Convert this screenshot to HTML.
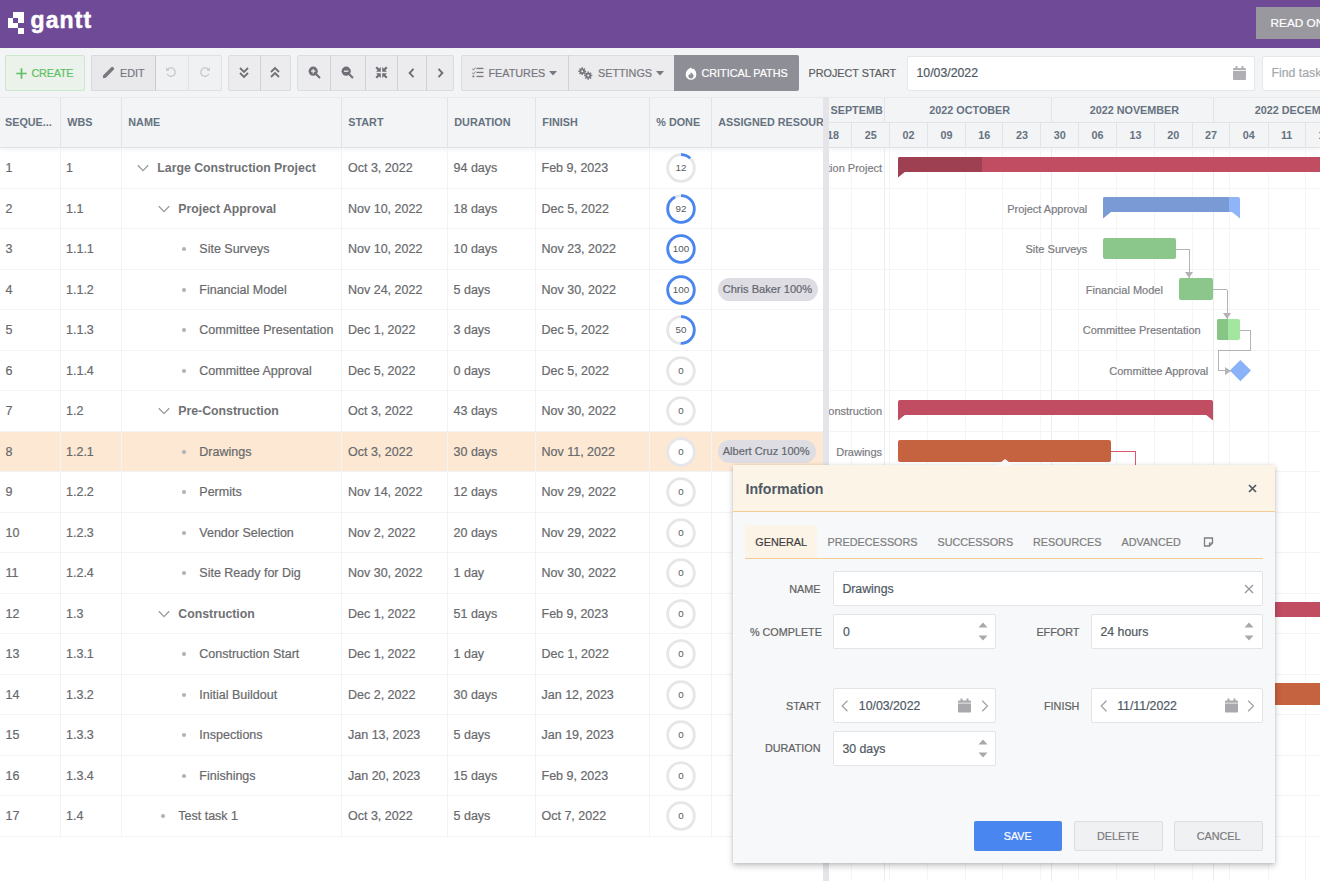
<!DOCTYPE html><html><head><meta charset="utf-8"><style>
*{box-sizing:border-box;margin:0;padding:0}
html,body{width:1320px;height:881px;overflow:hidden;background:#fff;font-family:"Liberation Sans", sans-serif;}
.a{position:absolute}
.t{position:absolute;white-space:nowrap;line-height:1}
.btn{position:absolute;top:55px;height:36px;background:#ececee;border:1px solid #dcdde1;}
.hc{position:absolute;font-size:10.8px;font-weight:700;color:#667280;white-space:nowrap;line-height:1}
.cell{position:absolute;font-size:12.5px;color:#68696c;white-space:nowrap;line-height:1}
.vl{position:absolute;width:1px;background:#f2f3f5}
.hl{position:absolute;height:1px;background:#f2f3f5}
.lbl{position:absolute;font-size:11px;color:#7b7b7f;white-space:nowrap;line-height:1;text-align:right}
.chip{position:absolute;height:23px;border-radius:12px;background:#dddde3;color:#64676e;font-size:11.1px;line-height:23px;padding:0 6px 0 5px;white-space:nowrap}
.fl{position:absolute;font-size:10.8px;color:#616161;white-space:nowrap;line-height:1;text-align:right}
.inp{position:absolute;background:#fff;border:1px solid #e3e4e8;border-radius:2px}
.it{position:absolute;font-size:12.3px;color:#4f5964;white-space:nowrap;line-height:1}
.tab{position:absolute;font-size:10.8px;color:#7d7d7d;white-space:nowrap;line-height:1}
.cell,.lbl,.fl,.it,.tab,.chip,.t{-webkit-text-stroke:0.2px currentColor}
.bold{-webkit-text-stroke:0}
</style></head><body>
<div class="a" style="left:0;top:0;width:1320px;height:48px;background:#6f4a97"></div>
<div class="a" style="left:13.10px;top:12.30px;width:5.40px;height:5.40px;background:#fff"></div>
<div class="a" style="left:18.40px;top:12.30px;width:5.40px;height:5.40px;background:#fff"></div>
<div class="a" style="left:7.80px;top:17.60px;width:5.40px;height:5.40px;background:#fff"></div>
<div class="a" style="left:18.40px;top:17.60px;width:5.40px;height:5.40px;background:#fff"></div>
<div class="a" style="left:7.80px;top:22.90px;width:5.40px;height:5.40px;background:#fff"></div>
<div class="a" style="left:13.10px;top:22.90px;width:5.40px;height:5.40px;background:#fff"></div>
<div class="a" style="left:18.40px;top:28.20px;width:5.40px;height:5.40px;background:#fff"></div>
<div class="t" style="left:30.5px;top:9px;font-size:23px;font-weight:700;color:#fff;letter-spacing:1.1px;-webkit-text-stroke:0.5px #fff">gantt</div>
<div class="a" style="left:1256px;top:7px;width:80px;height:32px;background:#98989e"></div>
<div class="t" style="left:1270.5px;top:18px;font-size:11.8px;color:#fff">READ ONLY</div>
<div class="a" style="left:0;top:48px;width:1320px;height:50px;background:#f3f4f6"></div>
<div class="a" style="left:5px;top:55px;width:80px;height:36px;background:#ebf2ec;border:1px solid #cbe8cc;border-radius:2px"></div>
<svg class="a" style="left:16px;top:67.8px" width="11" height="11" viewBox="0 0 11 11"><path d="M5.5 0.3 V10.7 M0.3 5.5 H10.7" stroke="#5cc160" stroke-width="1.7"/></svg>
<div class="t" style="left:31.5px;top:68px;font-size:10.8px;color:#5cc160;letter-spacing:-0.2px">CREATE</div>
<div class="a" style="left:91px;top:55px;width:131px;height:36px;background:#f0f1f3;border:1px solid #dfe0e3;border-radius:2px"></div>
<div class="a" style="left:91px;top:55px;width:64.5px;height:36px;background:#e9e9ec;border:1px solid #d9dade;border-right:1px solid #c9cacf;border-radius:2px 0 0 2px"></div>
<div class="a" style="left:188px;top:55px;width:1px;height:36px;background:#e2e3e6"></div>
<svg class="a" style="left:102px;top:66px" width="13" height="13" viewBox="0 0 13 13"><path d="M0.8 12.2 L1.3 9.2 L9.2 1.3 Q10.2 0.3 11.2 1.3 L11.7 1.8 Q12.7 2.8 11.7 3.8 L3.8 11.7 Z" fill="#77777f"/></svg>
<div class="t" style="left:120px;top:68px;font-size:10.8px;color:#77777f">EDIT</div>
<svg class="a" style="left:165px;top:66px" width="12" height="12" viewBox="0 0 12 12"><path d="M3 3.2 A4.2 4.2 0 1 1 2.2 8" fill="none" stroke="#c6c6ca" stroke-width="1.3"/><path d="M1 1.5 L1.2 5 L4.6 4.4 Z" fill="#c6c6ca"/></svg>
<svg class="a" style="left:199px;top:66px" width="12" height="12" viewBox="0 0 12 12"><path d="M9 3.2 A4.2 4.2 0 1 0 9.8 8" fill="none" stroke="#c6c6ca" stroke-width="1.3"/><path d="M11 1.5 L10.8 5 L7.4 4.4 Z" fill="#c6c6ca"/></svg>
<div class="a" style="left:228px;top:55px;width:62.5px;height:36px;background:#ececee;border:1px solid #dcdde1;border-radius:2px"></div>
<div class="a" style="left:259.5px;top:55px;width:1px;height:36px;background:#cfd0d4"></div>
<svg class="a" style="left:238px;top:66px" width="12" height="13" viewBox="0 0 12 13"><path d="M2 2 L6 6 L10 2 M2 7 L6 11 L10 7" fill="none" stroke="#6f6f77" stroke-width="1.8"/></svg>
<svg class="a" style="left:268.5px;top:66px" width="12" height="13" viewBox="0 0 12 13"><path d="M2 6 L6 2 L10 6 M2 11 L6 7 L10 11" fill="none" stroke="#6f6f77" stroke-width="1.8"/></svg>
<div class="a" style="left:297px;top:55px;width:156.5px;height:36px;background:#ececee;border:1px solid #dcdde1;border-radius:2px"></div>
<div class="a" style="left:330.4px;top:55px;width:1px;height:36px;background:#cfd0d4"></div>
<div class="a" style="left:364.5px;top:55px;width:1px;height:36px;background:#cfd0d4"></div>
<div class="a" style="left:397.3px;top:55px;width:1px;height:36px;background:#cfd0d4"></div>
<div class="a" style="left:425.5px;top:55px;width:1px;height:36px;background:#cfd0d4"></div>
<svg class="a" style="left:307.5px;top:66px" width="13" height="13" viewBox="0 0 13 13"><circle cx="5.2" cy="5.2" r="4.6" fill="#6f6f77"/><path d="M8.2 8.2 L12 12" stroke="#6f6f77" stroke-width="2"/><path d="M5.2 3 V7.4 M3 5.2 H7.4" stroke="#ececee" stroke-width="1.3"/></svg>
<svg class="a" style="left:341px;top:66px" width="13" height="13" viewBox="0 0 13 13"><circle cx="5.2" cy="5.2" r="4.6" fill="#6f6f77"/><path d="M8.2 8.2 L12 12" stroke="#6f6f77" stroke-width="2"/><path d="M3 5.2 H7.4" stroke="#ececee" stroke-width="1.3"/></svg>
<svg class="a" style="left:374.5px;top:66px" width="13" height="13" viewBox="0 0 13 13"><g stroke="#6f6f77" stroke-width="2.2" fill="none"><path d="M1.2 1.2 L4 4 M11.8 1.2 L9 4 M1.2 11.8 L4 9 M11.8 11.8 L9 9"/></g><g fill="#6f6f77"><path d="M5.8 1 V5.8 H1 Z M7.2 1 V5.8 H12 Z M5.8 12 V7.2 H1 Z M7.2 12 V7.2 H12 Z"/></g></svg>
<svg class="a" style="left:407px;top:66.5px" width="9" height="12" viewBox="0 0 9 12"><path d="M6.5 1.8 L2.6 6 L6.5 10.2" fill="none" stroke="#6f6f77" stroke-width="1.9"/></svg>
<svg class="a" style="left:435.5px;top:66.5px" width="9" height="12" viewBox="0 0 9 12"><path d="M2.5 1.8 L6.4 6 L2.5 10.2" fill="none" stroke="#6f6f77" stroke-width="1.9"/></svg>
<div class="a" style="left:460.5px;top:55px;width:214px;height:36px;background:#ececee;border:1px solid #dcdde1;border-radius:2px"></div>
<div class="a" style="left:567.5px;top:55px;width:1px;height:36px;background:#cfd0d4"></div>
<svg class="a" style="left:471.5px;top:67px" width="12" height="11" viewBox="0 0 12 11"><g fill="#77777f"><rect x="4.5" y="0.8" width="7" height="1.3"/><rect x="4.5" y="4.8" width="7" height="1.3"/><rect x="4.5" y="8.8" width="7" height="1.3"/><path d="M0.5 1.5 L1.5 2.5 L3.3 0.2 L3.8 0.7 L1.5 3.5 L0 2 Z"/><path d="M0.5 5.5 L1.5 6.5 L3.3 4.2 L3.8 4.7 L1.5 7.5 L0 6 Z"/><rect x="0.5" y="8.5" width="1.8" height="1.8"/></g></svg>
<div class="t" style="left:488.5px;top:68px;font-size:10.8px;color:#77777f">FEATURES</div>
<svg class="a" style="left:548.5px;top:71px" width="8" height="5" viewBox="0 0 8 5"><path d="M0 0 H8 L4 4.5 Z" fill="#77777f"/></svg>
<svg class="a" style="left:578px;top:67px" width="15" height="13" viewBox="0 0 15 13"><g fill="#77777f"><circle cx="4.2" cy="4.2" r="2.6"/><circle cx="10.2" cy="8.6" r="2.8"/></g><g stroke="#77777f" stroke-width="1.5"><path d="M4.2 0.3 V8.1 M0.3 4.2 H8.1 M1.5 1.5 L6.9 6.9 M6.9 1.5 L1.5 6.9"/><path d="M10.2 4.5 V12.7 M6.1 8.6 H14.3 M7.3 5.7 L13.1 11.5 M13.1 5.7 L7.3 11.5"/></g><g fill="#ececee"><circle cx="4.2" cy="4.2" r="1"/><circle cx="10.2" cy="8.6" r="1.1"/></g></svg>
<div class="t" style="left:598px;top:68px;font-size:10.8px;color:#77777f">SETTINGS</div>
<svg class="a" style="left:656px;top:71px" width="8" height="5" viewBox="0 0 8 5"><path d="M0 0 H8 L4 4.5 Z" fill="#77777f"/></svg>
<div class="a" style="left:674px;top:55px;width:125px;height:36px;background:#8e8e96;border-radius:0 2px 2px 0"></div>
<svg class="a" style="left:685px;top:66.5px" width="12" height="13" viewBox="0 0 12 13"><path d="M6 0.5 C6.5 1.8 7.5 2.3 8.3 1.6 C10.2 3 11.3 5 11.3 7.4 A5.3 5.3 0 0 1 0.7 7.4 C0.7 4.5 2.8 1.8 6 0.5 Z" fill="#fff"/><path d="M6 5.2 C6.6 6.2 8.6 7.2 8.6 8.8 A2.6 2.6 0 0 1 3.4 8.8 C3.4 7.8 4 7.3 4.5 7 C4.6 7.8 5 8 5.4 8 C5.2 7 5.4 6 6 5.2 Z" fill="#8e8e96"/></svg>
<div class="t" style="left:701.5px;top:68px;font-size:10.8px;color:#fff">CRITICAL PATHS</div>
<div class="t" style="left:808.5px;top:68px;font-size:10.8px;color:#5c5c62">PROJECT START</div>
<div class="inp" style="left:906.5px;top:55.5px;width:348px;height:35px;border-color:#e6e7ea"></div>
<div class="it" style="left:916.5px;top:67px">10/03/2022</div>
<svg class="a" style="left:1233px;top:66px" width="13" height="14" viewBox="0 0 13 14"><rect x="0" y="2" width="13" height="12" rx="1" fill="#b0b0b4"/><rect x="2.5" y="0" width="2" height="3" fill="#b0b0b4"/><rect x="8.5" y="0" width="2" height="3" fill="#b0b0b4"/><rect x="0" y="4.2" width="13" height="0.8" fill="#fff"/></svg>
<div class="inp" style="left:1261.5px;top:55.5px;width:80px;height:35px;border-color:#e6e7ea"></div>
<div class="it" style="left:1271.5px;top:67px;color:#a5a8ad">Find task</div>
<div class="a" style="left:0;top:97px;width:1320px;height:51px;background:#f3f4f6;border-top:1px solid #e9eaed;border-bottom:1px solid #e1e2e5;box-shadow:0 2px 4px rgba(0,0,0,0.05)"></div>
<div class="hc" style="left:5px;top:117.3px">SEQUE...</div>
<div class="a" style="left:60px;top:98px;width:1px;height:49.5px;background:#e2e3e7"></div>
<div class="hc" style="left:67.3px;top:117.3px">WBS</div>
<div class="a" style="left:121px;top:98px;width:1px;height:49.5px;background:#e2e3e7"></div>
<div class="hc" style="left:128.3px;top:117.3px">NAME</div>
<div class="a" style="left:341px;top:98px;width:1px;height:49.5px;background:#e2e3e7"></div>
<div class="hc" style="left:348.3px;top:117.3px">START</div>
<div class="a" style="left:447px;top:98px;width:1px;height:49.5px;background:#e2e3e7"></div>
<div class="hc" style="left:454.3px;top:117.3px">DURATION</div>
<div class="a" style="left:535px;top:98px;width:1px;height:49.5px;background:#e2e3e7"></div>
<div class="hc" style="left:542.3px;top:117.3px">FINISH</div>
<div class="a" style="left:649px;top:98px;width:1px;height:49.5px;background:#e2e3e7"></div>
<div class="hc" style="left:656.3px;top:117.3px">% DONE</div>
<div class="a" style="left:711px;top:98px;width:1px;height:49.5px;background:#e2e3e7"></div>
<div class="hc" style="left:718.3px;top:117.3px">ASSIGNED RESOUR</div>
<div class="a" style="left:0;top:431.50px;width:823.7px;height:40.5px;background:#fce8d3"></div>
<div class="vl" style="left:60px;top:148px;height:688.5px"></div>
<div class="vl" style="left:121px;top:148px;height:688.5px"></div>
<div class="vl" style="left:341px;top:148px;height:688.5px"></div>
<div class="vl" style="left:447px;top:148px;height:688.5px"></div>
<div class="vl" style="left:535px;top:148px;height:688.5px"></div>
<div class="vl" style="left:649px;top:148px;height:688.5px"></div>
<div class="vl" style="left:711px;top:148px;height:688.5px"></div>
<div class="hl" style="left:0;top:187.50px;width:823.7px"></div>
<div class="hl" style="left:0;top:228.00px;width:823.7px"></div>
<div class="hl" style="left:0;top:268.50px;width:823.7px"></div>
<div class="hl" style="left:0;top:309.00px;width:823.7px"></div>
<div class="hl" style="left:0;top:349.50px;width:823.7px"></div>
<div class="hl" style="left:0;top:390.00px;width:823.7px"></div>
<div class="hl" style="left:0;top:430.50px;width:823.7px"></div>
<div class="hl" style="left:0;top:471.00px;width:823.7px"></div>
<div class="hl" style="left:0;top:511.50px;width:823.7px"></div>
<div class="hl" style="left:0;top:552.00px;width:823.7px"></div>
<div class="hl" style="left:0;top:592.50px;width:823.7px"></div>
<div class="hl" style="left:0;top:633.00px;width:823.7px"></div>
<div class="hl" style="left:0;top:673.50px;width:823.7px"></div>
<div class="hl" style="left:0;top:714.00px;width:823.7px"></div>
<div class="hl" style="left:0;top:754.50px;width:823.7px"></div>
<div class="hl" style="left:0;top:795.00px;width:823.7px"></div>
<div class="hl" style="left:0;top:835.50px;width:823.7px"></div>
<div class="cell" style="left:5.5px;top:162.35px">1</div>
<div class="cell" style="left:66px;top:162.35px">1</div>
<svg class="a" style="left:136.80px;top:164.25px" width="12" height="8" viewBox="0 0 12 8"><path d="M0.8 1.2 L6 6.6 L11.2 1.2" fill="none" stroke="#9a9ba0" stroke-width="1.35"/></svg>
<div class="cell bold" style="left:157.30px;top:162.35px;font-weight:700;font-size:12.3px;color:#707174">Large Construction Project</div>
<div class="cell" style="left:348px;top:162.35px">Oct 3, 2022</div>
<div class="cell" style="left:453.5px;top:162.35px">94 days</div>
<div class="cell" style="left:541.5px;top:162.35px">Feb 9, 2023</div>
<svg class="a" style="left:666.00px;top:153.25px" width="30" height="30" viewBox="0 0 30 30"><circle cx="15" cy="15" r="13.3" fill="none" stroke="#e6e6e8" stroke-width="2.8"/><circle cx="15" cy="15" r="13.3" fill="none" stroke="#4a86f0" stroke-width="2.8" stroke-dasharray="10.03 83.57" transform="rotate(-90 15 15)"/><text x="15" y="18.3" text-anchor="middle" font-family="Liberation Sans" font-size="9.8" fill="#55585c">12</text></svg>
<div class="cell" style="left:5.5px;top:202.85px">2</div>
<div class="cell" style="left:66px;top:202.85px">1.1</div>
<svg class="a" style="left:157.80px;top:204.75px" width="12" height="8" viewBox="0 0 12 8"><path d="M0.8 1.2 L6 6.6 L11.2 1.2" fill="none" stroke="#9a9ba0" stroke-width="1.35"/></svg>
<div class="cell bold" style="left:178.30px;top:202.85px;font-weight:700;font-size:12.3px;color:#707174">Project Approval</div>
<div class="cell" style="left:348px;top:202.85px">Nov 10, 2022</div>
<div class="cell" style="left:453.5px;top:202.85px">18 days</div>
<div class="cell" style="left:541.5px;top:202.85px">Dec 5, 2022</div>
<svg class="a" style="left:666.00px;top:193.75px" width="30" height="30" viewBox="0 0 30 30"><circle cx="15" cy="15" r="13.3" fill="none" stroke="#e6e6e8" stroke-width="2.8"/><circle cx="15" cy="15" r="13.3" fill="none" stroke="#4a86f0" stroke-width="2.8" stroke-dasharray="76.88 83.57" transform="rotate(-90 15 15)"/><text x="15" y="18.3" text-anchor="middle" font-family="Liberation Sans" font-size="9.8" fill="#55585c">92</text></svg>
<div class="cell" style="left:5.5px;top:243.35px">3</div>
<div class="cell" style="left:66px;top:243.35px">1.1.1</div>
<div class="a" style="left:182.00px;top:247.45px;width:3.6px;height:3.6px;border-radius:50%;background:#b3b4b8"></div>
<div class="cell" style="left:199.30px;top:243.35px">Site Surveys</div>
<div class="cell" style="left:348px;top:243.35px">Nov 10, 2022</div>
<div class="cell" style="left:453.5px;top:243.35px">10 days</div>
<div class="cell" style="left:541.5px;top:243.35px">Nov 23, 2022</div>
<svg class="a" style="left:666.00px;top:234.25px" width="30" height="30" viewBox="0 0 30 30"><circle cx="15" cy="15" r="13.3" fill="none" stroke="#e6e6e8" stroke-width="2.8"/><circle cx="15" cy="15" r="13.3" fill="none" stroke="#4a86f0" stroke-width="2.8" stroke-dasharray="83.57 83.57" transform="rotate(-90 15 15)"/><text x="15" y="18.3" text-anchor="middle" font-family="Liberation Sans" font-size="9.8" fill="#55585c">100</text></svg>
<div class="cell" style="left:5.5px;top:283.85px">4</div>
<div class="cell" style="left:66px;top:283.85px">1.1.2</div>
<div class="a" style="left:182.00px;top:287.95px;width:3.6px;height:3.6px;border-radius:50%;background:#b3b4b8"></div>
<div class="cell" style="left:199.30px;top:283.85px">Financial Model</div>
<div class="cell" style="left:348px;top:283.85px">Nov 24, 2022</div>
<div class="cell" style="left:453.5px;top:283.85px">5 days</div>
<div class="cell" style="left:541.5px;top:283.85px">Nov 30, 2022</div>
<svg class="a" style="left:666.00px;top:274.75px" width="30" height="30" viewBox="0 0 30 30"><circle cx="15" cy="15" r="13.3" fill="none" stroke="#e6e6e8" stroke-width="2.8"/><circle cx="15" cy="15" r="13.3" fill="none" stroke="#4a86f0" stroke-width="2.8" stroke-dasharray="83.57 83.57" transform="rotate(-90 15 15)"/><text x="15" y="18.3" text-anchor="middle" font-family="Liberation Sans" font-size="9.8" fill="#55585c">100</text></svg>
<div class="chip" style="left:717.7px;top:278.25px">Chris Baker 100%</div>
<div class="cell" style="left:5.5px;top:324.35px">5</div>
<div class="cell" style="left:66px;top:324.35px">1.1.3</div>
<div class="a" style="left:182.00px;top:328.45px;width:3.6px;height:3.6px;border-radius:50%;background:#b3b4b8"></div>
<div class="cell" style="left:199.30px;top:324.35px">Committee Presentation</div>
<div class="cell" style="left:348px;top:324.35px">Dec 1, 2022</div>
<div class="cell" style="left:453.5px;top:324.35px">3 days</div>
<div class="cell" style="left:541.5px;top:324.35px">Dec 5, 2022</div>
<svg class="a" style="left:666.00px;top:315.25px" width="30" height="30" viewBox="0 0 30 30"><circle cx="15" cy="15" r="13.3" fill="none" stroke="#e6e6e8" stroke-width="2.8"/><circle cx="15" cy="15" r="13.3" fill="none" stroke="#4a86f0" stroke-width="2.8" stroke-dasharray="41.78 83.57" transform="rotate(-90 15 15)"/><text x="15" y="18.3" text-anchor="middle" font-family="Liberation Sans" font-size="9.8" fill="#55585c">50</text></svg>
<div class="cell" style="left:5.5px;top:364.85px">6</div>
<div class="cell" style="left:66px;top:364.85px">1.1.4</div>
<div class="a" style="left:182.00px;top:368.95px;width:3.6px;height:3.6px;border-radius:50%;background:#b3b4b8"></div>
<div class="cell" style="left:199.30px;top:364.85px">Committee Approval</div>
<div class="cell" style="left:348px;top:364.85px">Dec 5, 2022</div>
<div class="cell" style="left:453.5px;top:364.85px">0 days</div>
<div class="cell" style="left:541.5px;top:364.85px">Dec 5, 2022</div>
<svg class="a" style="left:666.00px;top:355.75px" width="30" height="30" viewBox="0 0 30 30"><circle cx="15" cy="15" r="13.3" fill="none" stroke="#e6e6e8" stroke-width="2.8"/><text x="15" y="18.3" text-anchor="middle" font-family="Liberation Sans" font-size="9.8" fill="#55585c">0</text></svg>
<div class="cell" style="left:5.5px;top:405.35px">7</div>
<div class="cell" style="left:66px;top:405.35px">1.2</div>
<svg class="a" style="left:157.80px;top:407.25px" width="12" height="8" viewBox="0 0 12 8"><path d="M0.8 1.2 L6 6.6 L11.2 1.2" fill="none" stroke="#9a9ba0" stroke-width="1.35"/></svg>
<div class="cell bold" style="left:178.30px;top:405.35px;font-weight:700;font-size:12.3px;color:#707174">Pre-Construction</div>
<div class="cell" style="left:348px;top:405.35px">Oct 3, 2022</div>
<div class="cell" style="left:453.5px;top:405.35px">43 days</div>
<div class="cell" style="left:541.5px;top:405.35px">Nov 30, 2022</div>
<svg class="a" style="left:666.00px;top:396.25px" width="30" height="30" viewBox="0 0 30 30"><circle cx="15" cy="15" r="13.3" fill="none" stroke="#e6e6e8" stroke-width="2.8"/><text x="15" y="18.3" text-anchor="middle" font-family="Liberation Sans" font-size="9.8" fill="#55585c">0</text></svg>
<div class="cell" style="left:5.5px;top:445.85px">8</div>
<div class="cell" style="left:66px;top:445.85px">1.2.1</div>
<div class="a" style="left:182.00px;top:449.95px;width:3.6px;height:3.6px;border-radius:50%;background:#b3b4b8"></div>
<div class="cell" style="left:199.30px;top:445.85px">Drawings</div>
<div class="cell" style="left:348px;top:445.85px">Oct 3, 2022</div>
<div class="cell" style="left:453.5px;top:445.85px">30 days</div>
<div class="cell" style="left:541.5px;top:445.85px">Nov 11, 2022</div>
<svg class="a" style="left:666.00px;top:436.75px" width="30" height="30" viewBox="0 0 30 30"><circle cx="15" cy="15" r="13.3" fill="#fff" stroke="#e6e6e8" stroke-width="2.8"/><text x="15" y="18.3" text-anchor="middle" font-family="Liberation Sans" font-size="9.8" fill="#55585c">0</text></svg>
<div class="chip" style="left:717.7px;top:440.25px">Albert Cruz 100%</div>
<div class="cell" style="left:5.5px;top:486.35px">9</div>
<div class="cell" style="left:66px;top:486.35px">1.2.2</div>
<div class="a" style="left:182.00px;top:490.45px;width:3.6px;height:3.6px;border-radius:50%;background:#b3b4b8"></div>
<div class="cell" style="left:199.30px;top:486.35px">Permits</div>
<div class="cell" style="left:348px;top:486.35px">Nov 14, 2022</div>
<div class="cell" style="left:453.5px;top:486.35px">12 days</div>
<div class="cell" style="left:541.5px;top:486.35px">Nov 29, 2022</div>
<svg class="a" style="left:666.00px;top:477.25px" width="30" height="30" viewBox="0 0 30 30"><circle cx="15" cy="15" r="13.3" fill="none" stroke="#e6e6e8" stroke-width="2.8"/><text x="15" y="18.3" text-anchor="middle" font-family="Liberation Sans" font-size="9.8" fill="#55585c">0</text></svg>
<div class="cell" style="left:5.5px;top:526.85px">10</div>
<div class="cell" style="left:66px;top:526.85px">1.2.3</div>
<div class="a" style="left:182.00px;top:530.95px;width:3.6px;height:3.6px;border-radius:50%;background:#b3b4b8"></div>
<div class="cell" style="left:199.30px;top:526.85px">Vendor Selection</div>
<div class="cell" style="left:348px;top:526.85px">Nov 2, 2022</div>
<div class="cell" style="left:453.5px;top:526.85px">20 days</div>
<div class="cell" style="left:541.5px;top:526.85px">Nov 29, 2022</div>
<svg class="a" style="left:666.00px;top:517.75px" width="30" height="30" viewBox="0 0 30 30"><circle cx="15" cy="15" r="13.3" fill="none" stroke="#e6e6e8" stroke-width="2.8"/><text x="15" y="18.3" text-anchor="middle" font-family="Liberation Sans" font-size="9.8" fill="#55585c">0</text></svg>
<div class="cell" style="left:5.5px;top:567.35px">11</div>
<div class="cell" style="left:66px;top:567.35px">1.2.4</div>
<div class="a" style="left:182.00px;top:571.45px;width:3.6px;height:3.6px;border-radius:50%;background:#b3b4b8"></div>
<div class="cell" style="left:199.30px;top:567.35px">Site Ready for Dig</div>
<div class="cell" style="left:348px;top:567.35px">Nov 30, 2022</div>
<div class="cell" style="left:453.5px;top:567.35px">1 day</div>
<div class="cell" style="left:541.5px;top:567.35px">Nov 30, 2022</div>
<svg class="a" style="left:666.00px;top:558.25px" width="30" height="30" viewBox="0 0 30 30"><circle cx="15" cy="15" r="13.3" fill="none" stroke="#e6e6e8" stroke-width="2.8"/><text x="15" y="18.3" text-anchor="middle" font-family="Liberation Sans" font-size="9.8" fill="#55585c">0</text></svg>
<div class="cell" style="left:5.5px;top:607.85px">12</div>
<div class="cell" style="left:66px;top:607.85px">1.3</div>
<svg class="a" style="left:157.80px;top:609.75px" width="12" height="8" viewBox="0 0 12 8"><path d="M0.8 1.2 L6 6.6 L11.2 1.2" fill="none" stroke="#9a9ba0" stroke-width="1.35"/></svg>
<div class="cell bold" style="left:178.30px;top:607.85px;font-weight:700;font-size:12.3px;color:#707174">Construction</div>
<div class="cell" style="left:348px;top:607.85px">Dec 1, 2022</div>
<div class="cell" style="left:453.5px;top:607.85px">51 days</div>
<div class="cell" style="left:541.5px;top:607.85px">Feb 9, 2023</div>
<svg class="a" style="left:666.00px;top:598.75px" width="30" height="30" viewBox="0 0 30 30"><circle cx="15" cy="15" r="13.3" fill="none" stroke="#e6e6e8" stroke-width="2.8"/><text x="15" y="18.3" text-anchor="middle" font-family="Liberation Sans" font-size="9.8" fill="#55585c">0</text></svg>
<div class="cell" style="left:5.5px;top:648.35px">13</div>
<div class="cell" style="left:66px;top:648.35px">1.3.1</div>
<div class="a" style="left:182.00px;top:652.45px;width:3.6px;height:3.6px;border-radius:50%;background:#b3b4b8"></div>
<div class="cell" style="left:199.30px;top:648.35px">Construction Start</div>
<div class="cell" style="left:348px;top:648.35px">Dec 1, 2022</div>
<div class="cell" style="left:453.5px;top:648.35px">1 day</div>
<div class="cell" style="left:541.5px;top:648.35px">Dec 1, 2022</div>
<svg class="a" style="left:666.00px;top:639.25px" width="30" height="30" viewBox="0 0 30 30"><circle cx="15" cy="15" r="13.3" fill="none" stroke="#e6e6e8" stroke-width="2.8"/><text x="15" y="18.3" text-anchor="middle" font-family="Liberation Sans" font-size="9.8" fill="#55585c">0</text></svg>
<div class="cell" style="left:5.5px;top:688.85px">14</div>
<div class="cell" style="left:66px;top:688.85px">1.3.2</div>
<div class="a" style="left:182.00px;top:692.95px;width:3.6px;height:3.6px;border-radius:50%;background:#b3b4b8"></div>
<div class="cell" style="left:199.30px;top:688.85px">Initial Buildout</div>
<div class="cell" style="left:348px;top:688.85px">Dec 2, 2022</div>
<div class="cell" style="left:453.5px;top:688.85px">30 days</div>
<div class="cell" style="left:541.5px;top:688.85px">Jan 12, 2023</div>
<svg class="a" style="left:666.00px;top:679.75px" width="30" height="30" viewBox="0 0 30 30"><circle cx="15" cy="15" r="13.3" fill="none" stroke="#e6e6e8" stroke-width="2.8"/><text x="15" y="18.3" text-anchor="middle" font-family="Liberation Sans" font-size="9.8" fill="#55585c">0</text></svg>
<div class="cell" style="left:5.5px;top:729.35px">15</div>
<div class="cell" style="left:66px;top:729.35px">1.3.3</div>
<div class="a" style="left:182.00px;top:733.45px;width:3.6px;height:3.6px;border-radius:50%;background:#b3b4b8"></div>
<div class="cell" style="left:199.30px;top:729.35px">Inspections</div>
<div class="cell" style="left:348px;top:729.35px">Jan 13, 2023</div>
<div class="cell" style="left:453.5px;top:729.35px">5 days</div>
<div class="cell" style="left:541.5px;top:729.35px">Jan 19, 2023</div>
<svg class="a" style="left:666.00px;top:720.25px" width="30" height="30" viewBox="0 0 30 30"><circle cx="15" cy="15" r="13.3" fill="none" stroke="#e6e6e8" stroke-width="2.8"/><text x="15" y="18.3" text-anchor="middle" font-family="Liberation Sans" font-size="9.8" fill="#55585c">0</text></svg>
<div class="cell" style="left:5.5px;top:769.85px">16</div>
<div class="cell" style="left:66px;top:769.85px">1.3.4</div>
<div class="a" style="left:182.00px;top:773.95px;width:3.6px;height:3.6px;border-radius:50%;background:#b3b4b8"></div>
<div class="cell" style="left:199.30px;top:769.85px">Finishings</div>
<div class="cell" style="left:348px;top:769.85px">Jan 20, 2023</div>
<div class="cell" style="left:453.5px;top:769.85px">15 days</div>
<div class="cell" style="left:541.5px;top:769.85px">Feb 9, 2023</div>
<svg class="a" style="left:666.00px;top:760.75px" width="30" height="30" viewBox="0 0 30 30"><circle cx="15" cy="15" r="13.3" fill="none" stroke="#e6e6e8" stroke-width="2.8"/><text x="15" y="18.3" text-anchor="middle" font-family="Liberation Sans" font-size="9.8" fill="#55585c">0</text></svg>
<div class="cell" style="left:5.5px;top:810.35px">17</div>
<div class="cell" style="left:66px;top:810.35px">1.4</div>
<div class="a" style="left:161.00px;top:814.45px;width:3.6px;height:3.6px;border-radius:50%;background:#b3b4b8"></div>
<div class="cell" style="left:178.30px;top:810.35px">Test task 1</div>
<div class="cell" style="left:348px;top:810.35px">Oct 3, 2022</div>
<div class="cell" style="left:453.5px;top:810.35px">5 days</div>
<div class="cell" style="left:541.5px;top:810.35px">Oct 7, 2022</div>
<svg class="a" style="left:666.00px;top:801.25px" width="30" height="30" viewBox="0 0 30 30"><circle cx="15" cy="15" r="13.3" fill="none" stroke="#e6e6e8" stroke-width="2.8"/><text x="15" y="18.3" text-anchor="middle" font-family="Liberation Sans" font-size="9.8" fill="#55585c">0</text></svg>
<div class="a" style="left:823.3px;top:97px;width:5.8px;height:784px;background:#e5e5e9"></div>
<div class="a" style="left:829px;top:97.5px;width:491px;height:784px;overflow:hidden">
<div class="a" style="left:0;top:-0.5px;width:600px;height:51px;background:#f3f4f6;border-top:1px solid #e9eaed;border-bottom:1px solid #e1e2e5"></div>
<div class="a" style="left:0;top:24.5px;width:600px;height:1px;background:#e2e3e7"></div>
<div class="a" style="left:55px;top:0;width:1px;height:25px;background:#e2e3e7"></div>
<div class="hc" style="left:1.50px;top:7px;width:53.3px;overflow:hidden">SEPTEMB</div>
<div class="a" style="left:222px;top:0;width:1px;height:25px;background:#e2e3e7"></div>
<div class="hc" style="left:57.00px;top:7px;width:167.40px;text-align:center">2022 OCTOBER</div>
<div class="a" style="left:384px;top:0;width:1px;height:25px;background:#e2e3e7"></div>
<div class="hc" style="left:224.40px;top:7px;width:162.00px;text-align:center">2022 NOVEMBER</div>
<div class="a" style="left:552px;top:0;width:1px;height:25px;background:#e2e3e7"></div>
<div class="hc" style="left:386.40px;top:7px;width:167.40px;text-align:center">2022 DECEMBER</div>
<div class="a" style="left:552px;top:0;width:1px;height:25px;background:#e2e3e7"></div>
<div class="hc" style="left:553.80px;top:7px;width:167.40px;text-align:center">2023 JANUARY</div>
<div class="a" style="left:-15px;top:25px;width:1px;height:25px;background:#e2e3e7"></div>
<div class="hc" style="left:-14.90px;top:32.5px;width:37.80px;text-align:center">18</div>
<div class="a" style="left:22px;top:25px;width:1px;height:25px;background:#e2e3e7"></div>
<div class="hc" style="left:22.90px;top:32.5px;width:37.80px;text-align:center">25</div>
<div class="a" style="left:60px;top:25px;width:1px;height:25px;background:#e2e3e7"></div>
<div class="hc" style="left:60.70px;top:32.5px;width:37.80px;text-align:center">02</div>
<div class="a" style="left:98px;top:25px;width:1px;height:25px;background:#e2e3e7"></div>
<div class="hc" style="left:98.50px;top:32.5px;width:37.80px;text-align:center">09</div>
<div class="a" style="left:136px;top:25px;width:1px;height:25px;background:#e2e3e7"></div>
<div class="hc" style="left:136.30px;top:32.5px;width:37.80px;text-align:center">16</div>
<div class="a" style="left:173px;top:25px;width:1px;height:25px;background:#e2e3e7"></div>
<div class="hc" style="left:174.10px;top:32.5px;width:37.80px;text-align:center">23</div>
<div class="a" style="left:211px;top:25px;width:1px;height:25px;background:#e2e3e7"></div>
<div class="hc" style="left:211.90px;top:32.5px;width:37.80px;text-align:center">30</div>
<div class="a" style="left:249px;top:25px;width:1px;height:25px;background:#e2e3e7"></div>
<div class="hc" style="left:249.70px;top:32.5px;width:37.80px;text-align:center">06</div>
<div class="a" style="left:287px;top:25px;width:1px;height:25px;background:#e2e3e7"></div>
<div class="hc" style="left:287.50px;top:32.5px;width:37.80px;text-align:center">13</div>
<div class="a" style="left:325px;top:25px;width:1px;height:25px;background:#e2e3e7"></div>
<div class="hc" style="left:325.30px;top:32.5px;width:37.80px;text-align:center">20</div>
<div class="a" style="left:363px;top:25px;width:1px;height:25px;background:#e2e3e7"></div>
<div class="hc" style="left:363.10px;top:32.5px;width:37.80px;text-align:center">27</div>
<div class="a" style="left:400px;top:25px;width:1px;height:25px;background:#e2e3e7"></div>
<div class="hc" style="left:400.90px;top:32.5px;width:37.80px;text-align:center">04</div>
<div class="a" style="left:439px;top:25px;width:1px;height:25px;background:#e2e3e7"></div>
<div class="hc" style="left:438.70px;top:32.5px;width:37.80px;text-align:center">11</div>
<div class="a" style="left:476px;top:25px;width:1px;height:25px;background:#e2e3e7"></div>
<div class="hc" style="left:476.50px;top:32.5px;width:37.80px;text-align:center">18</div>
<div class="vl" style="left:-15px;top:50px;height:740px;background:#f5f5f6"></div>
<div class="vl" style="left:22px;top:50px;height:740px;background:#f5f5f6"></div>
<div class="vl" style="left:60px;top:50px;height:740px;background:#f5f5f6"></div>
<div class="vl" style="left:98px;top:50px;height:740px;background:#f5f5f6"></div>
<div class="vl" style="left:136px;top:50px;height:740px;background:#f5f5f6"></div>
<div class="vl" style="left:173px;top:50px;height:740px;background:#f5f5f6"></div>
<div class="vl" style="left:211px;top:50px;height:740px;background:#f5f5f6"></div>
<div class="vl" style="left:249px;top:50px;height:740px;background:#f5f5f6"></div>
<div class="vl" style="left:287px;top:50px;height:740px;background:#f5f5f6"></div>
<div class="vl" style="left:325px;top:50px;height:740px;background:#f5f5f6"></div>
<div class="vl" style="left:363px;top:50px;height:740px;background:#f5f5f6"></div>
<div class="vl" style="left:400px;top:50px;height:740px;background:#f5f5f6"></div>
<div class="vl" style="left:439px;top:50px;height:740px;background:#f5f5f6"></div>
<div class="vl" style="left:476px;top:50px;height:740px;background:#f5f5f6"></div>
<div class="vl" style="left:55px;top:50px;height:740px;background:#ebecee"></div>
<div class="vl" style="left:222px;top:50px;height:740px;background:#ebecee"></div>
<div class="vl" style="left:384px;top:50px;height:740px;background:#ebecee"></div>
<div class="vl" style="left:552px;top:50px;height:740px;background:#ebecee"></div>
<div class="hl" style="left:0;top:90.00px;width:600px;background:#f3f4f6"></div>
<div class="hl" style="left:0;top:130.50px;width:600px;background:#f3f4f6"></div>
<div class="hl" style="left:0;top:171.00px;width:600px;background:#f3f4f6"></div>
<div class="hl" style="left:0;top:211.50px;width:600px;background:#f3f4f6"></div>
<div class="hl" style="left:0;top:252.00px;width:600px;background:#f3f4f6"></div>
<div class="hl" style="left:0;top:292.50px;width:600px;background:#f3f4f6"></div>
<div class="hl" style="left:0;top:333.00px;width:600px;background:#f3f4f6"></div>
<div class="hl" style="left:0;top:373.50px;width:600px;background:#f3f4f6"></div>
<div class="hl" style="left:0;top:414.00px;width:600px;background:#f3f4f6"></div>
<div class="hl" style="left:0;top:454.50px;width:600px;background:#f3f4f6"></div>
<div class="hl" style="left:0;top:495.00px;width:600px;background:#f3f4f6"></div>
<div class="hl" style="left:0;top:535.50px;width:600px;background:#f3f4f6"></div>
<div class="hl" style="left:0;top:576.00px;width:600px;background:#f3f4f6"></div>
<div class="hl" style="left:0;top:616.50px;width:600px;background:#f3f4f6"></div>
<div class="hl" style="left:0;top:657.00px;width:600px;background:#f3f4f6"></div>
<div class="hl" style="left:0;top:697.50px;width:600px;background:#f3f4f6"></div>
<div class="hl" style="left:0;top:738.00px;width:600px;background:#f3f4f6"></div>
</div>
<div class="a" style="left:829.1px;top:148px;width:490.9px;height:733px;overflow:hidden">
<div class="a" style="left:69.00px;top:8.80px;width:698.62px;height:14.8px;background:#c04d62;border-radius:2px 2px 0 0;overflow:hidden"><div class="a" style="left:0;top:0;width:84.00px;height:100%;background:#9e3f52"></div></div>
<svg class="a" style="left:69.00px;top:23.30px" width="8" height="7" viewBox="0 0 8 7"><path d="M0 0 H8 L0 6.5 Z" fill="#9e3f52"/></svg>
<svg class="a" style="left:759.62px;top:23.30px" width="8" height="7" viewBox="0 0 8 7"><path d="M0 0 H8 V6.5 Z" fill="#c04d62"/></svg>
<div class="lbl" style="left:-147.00px;top:15.25px;width:200px">Large Construction Project</div>
<div class="a" style="left:274.20px;top:49.30px;width:137.02px;height:14.8px;background:#8fb4f8;border-radius:2px 2px 0 0;overflow:hidden"><div class="a" style="left:0;top:0;width:126.06px;height:100%;background:#7a9ad6"></div></div>
<svg class="a" style="left:274.20px;top:63.80px" width="8" height="7" viewBox="0 0 8 7"><path d="M0 0 H8 L0 6.5 Z" fill="#7a9ad6"/></svg>
<svg class="a" style="left:403.22px;top:63.80px" width="8" height="7" viewBox="0 0 8 7"><path d="M0 0 H8 V6.5 Z" fill="#8fb4f8"/></svg>
<div class="lbl" style="left:58.20px;top:55.75px;width:200px">Project Approval</div>
<div class="a" style="left:274.20px;top:89.60px;width:72.22px;height:21.6px;background:#8bc78a;border-radius:2px;overflow:hidden"></div>
<div class="lbl" style="left:58.20px;top:96.25px;width:200px">Site Surveys</div>
<div class="a" style="left:349.80px;top:130.10px;width:34.42px;height:21.6px;background:#8bc78a;border-radius:2px;overflow:hidden"></div>
<div class="lbl" style="left:133.80px;top:136.75px;width:200px">Financial Model</div>
<div class="a" style="left:387.60px;top:170.60px;width:23.62px;height:21.6px;background:#a3e6a0;border-radius:2px;overflow:hidden"><div class="a" style="left:0;top:0;width:11.81px;height:100%;background:#86c585"></div></div>
<div class="lbl" style="left:171.60px;top:177.25px;width:200px">Committee Presentation</div>
<div class="a" style="left:403.82px;top:215.35px;width:14.8px;height:14.8px;background:#8ab2f8;transform:rotate(45deg)"></div>
<div class="lbl" style="left:179.22px;top:217.75px;width:200px">Committee Approval</div>
<div class="a" style="left:69.00px;top:251.80px;width:315.22px;height:14.8px;background:#c04d62;border-radius:2px 2px 0 0;overflow:hidden"></div>
<svg class="a" style="left:69.00px;top:266.30px" width="8" height="7" viewBox="0 0 8 7"><path d="M0 0 H8 L0 6.5 Z" fill="#c04d62"/></svg>
<svg class="a" style="left:376.22px;top:266.30px" width="8" height="7" viewBox="0 0 8 7"><path d="M0 0 H8 V6.5 Z" fill="#c04d62"/></svg>
<div class="lbl" style="left:-147.00px;top:258.25px;width:200px">Pre-Construction</div>
<div class="a" style="left:69.00px;top:292.10px;width:212.62px;height:21.6px;background:#c5623f;border-radius:2px;overflow:hidden"></div>
<div class="lbl" style="left:-147.00px;top:298.75px;width:200px">Drawings</div>
<div class="a" style="left:387.60px;top:454.30px;width:380.03px;height:14.8px;background:#c04d62;border-radius:2px 2px 0 0;overflow:hidden"></div>
<svg class="a" style="left:387.60px;top:468.80px" width="8" height="7" viewBox="0 0 8 7"><path d="M0 0 H8 L0 6.5 Z" fill="#c04d62"/></svg>
<svg class="a" style="left:759.62px;top:468.80px" width="8" height="7" viewBox="0 0 8 7"><path d="M0 0 H8 V6.5 Z" fill="#c04d62"/></svg>
<div class="a" style="left:393.00px;top:535.10px;width:223.42px;height:21.6px;background:#c5623f;border-radius:2px;overflow:hidden"></div>
<div class="a" style="left:346.42px;top:100.75px;width:13.78px;height:1px;background:#b3b3b6"></div>
<div class="a" style="left:359.70px;top:101.25px;width:1px;height:28.85px;background:#b3b3b6"></div>
<svg class="a" style="left:356.20px;top:124.10px" width="8" height="6" viewBox="0 0 8 6"><path d="M0 0 H8 L4 6 Z" fill="#b3b3b6"/></svg>
<div class="a" style="left:384.22px;top:141.25px;width:13.88px;height:1px;background:#b3b3b6"></div>
<div class="a" style="left:397.60px;top:141.75px;width:1px;height:28.85px;background:#b3b3b6"></div>
<svg class="a" style="left:394.10px;top:164.60px" width="8" height="6" viewBox="0 0 8 6"><path d="M0 0 H8 L4 6 Z" fill="#b3b3b6"/></svg>
<div class="a" style="left:411.22px;top:181.75px;width:10.38px;height:1px;background:#b3b3b6"></div>
<div class="a" style="left:421.10px;top:182.25px;width:1px;height:20.15px;background:#b3b3b6"></div>
<div class="a" style="left:389.40px;top:201.90px;width:32.20px;height:1px;background:#b3b3b6"></div>
<div class="a" style="left:388.90px;top:202.40px;width:1px;height:20.35px;background:#b3b3b6"></div>
<div class="a" style="left:389.40px;top:222.25px;width:11.50px;height:1px;background:#b3b3b6"></div>
<svg class="a" style="left:395.90px;top:218.75px" width="6" height="8" viewBox="0 0 6 8"><path d="M0 0 V8 L6 4 Z" fill="#b3b3b6"/></svg>
<div class="a" style="left:281.62px;top:303.15px;width:24.88px;height:1.2px;background:#d9596a"></div>
<div class="a" style="left:305.90px;top:303.75px;width:1.2px;height:48.25px;background:#d9596a"></div>
</div>
<div class="a" style="left:733px;top:464.8px;width:542px;height:398px;background:#f7f8fa;box-shadow:0 3px 6px rgba(0,0,0,0.22),0 0 3px rgba(0,0,0,0.1)"></div>
<div class="a" style="left:733px;top:464.8px;width:542px;height:47.0px;background:#fdf4e8;border-bottom:1px solid #f6cb92"></div>
<svg class="a" style="left:995.70px;top:458.60px" width="18" height="7" viewBox="0 0 18 7"><path d="M0 7 L9 0 L18 7 Z" fill="#f8f8f9"/></svg>
<div class="t" style="left:745.5px;top:482px;font-size:14.2px;font-weight:700;color:#4f5964;-webkit-text-stroke:0">Information</div>
<svg class="a" style="left:1247.5px;top:483.5px" width="9" height="9" viewBox="0 0 9 9"><path d="M1 1 L8 8 M8 1 L1 8" stroke="#4f5964" stroke-width="1.7"/></svg>
<div class="a" style="left:745.2px;top:524.5px;width:72px;height:33.5px;background:#fdf4e8"></div>
<div class="a" style="left:745.2px;top:557.8px;width:517.6px;height:1.2px;background:#f6cb92"></div>
<div class="tab" style="left:755.3px;top:537px;color:#3d3d3d">GENERAL</div>
<div class="tab" style="left:827.5px;top:537px">PREDECESSORS</div>
<div class="tab" style="left:937.5px;top:537px">SUCCESSORS</div>
<div class="tab" style="left:1033px;top:537px">RESOURCES</div>
<div class="tab" style="left:1121.5px;top:537px">ADVANCED</div>
<svg class="a" style="left:1203px;top:536.5px" width="11" height="10" viewBox="0 0 11 10"><path d="M1.5 1 H9.5 V6 L6.5 9 H1.5 Z" fill="none" stroke="#7d7d7d" stroke-width="1.3"/><path d="M6.5 9 V6 H9.5" fill="none" stroke="#7d7d7d" stroke-width="1.2"/></svg>
<div class="fl" style="left:700.50px;top:583.70px;width:120px">NAME</div>
<div class="inp" style="left:832.5px;top:571.3px;width:430.5px;height:35px"></div>
<div class="it" style="left:842.4px;top:582.9px">Drawings</div>
<svg class="a" style="left:1244px;top:583.5px" width="10" height="10" viewBox="0 0 10 10"><path d="M1 1 L9 9 M9 1 L1 9" stroke="#9a9a9e" stroke-width="1.4"/></svg>
<div class="fl" style="left:701.90px;top:626.70px;width:120px">% COMPLETE</div>
<div class="inp" style="left:833.4px;top:614px;width:163px;height:35.3px"></div>
<div class="it" style="left:843px;top:626px">0</div>
<svg class="a" style="left:977.50px;top:621.80px" width="10" height="19" viewBox="0 0 10 19"><path d="M0.5 5.5 L5 0.5 L9.5 5.5 Z M0.5 13.5 L5 18.5 L9.5 13.5 Z" fill="#a9a9ad"/></svg>
<div class="fl" style="left:959.40px;top:626.70px;width:120px">EFFORT</div>
<div class="inp" style="left:1090.6px;top:614px;width:172.2px;height:35.3px"></div>
<div class="it" style="left:1100.5px;top:626px">24 hours</div>
<svg class="a" style="left:1243.50px;top:621.80px" width="10" height="19" viewBox="0 0 10 19"><path d="M0.5 5.5 L5 0.5 L9.5 5.5 Z M0.5 13.5 L5 18.5 L9.5 13.5 Z" fill="#a9a9ad"/></svg>
<div class="fl" style="left:700.50px;top:700.70px;width:120px">START</div>
<div class="inp" style="left:832.6px;top:688.3px;width:163.8px;height:34.5px"></div>
<svg class="a" style="left:841.00px;top:700.00px" width="8" height="12" viewBox="0 0 8 12"><path d="M6.5 0.8 L1.2 6 L6.5 11.2" fill="none" stroke="#a0a0a4" stroke-width="1.2"/></svg>
<div class="it" style="left:858.8px;top:700px">10/03/2022</div>
<svg class="a" style="left:958.40px;top:698.30px" width="13" height="14.5" viewBox="0 0 13 14.5"><rect x="0" y="2.5" width="13" height="12" rx="1" fill="#a9a9ad"/><rect x="2.5" y="0.5" width="2" height="3" fill="#a9a9ad"/><rect x="8.5" y="0.5" width="2" height="3" fill="#a9a9ad"/><rect x="0" y="4.7" width="13" height="0.8" fill="#f7f8fa"/></svg>
<svg class="a" style="left:980.50px;top:700.00px" width="8" height="12" viewBox="0 0 8 12"><path d="M1.2 0.8 L6.5 6 L1.2 11.2" fill="none" stroke="#a0a0a4" stroke-width="1.2"/></svg>
<div class="fl" style="left:959.40px;top:700.70px;width:120px">FINISH</div>
<div class="inp" style="left:1090.6px;top:688.3px;width:172.2px;height:34.5px"></div>
<svg class="a" style="left:1099.80px;top:700.00px" width="8" height="12" viewBox="0 0 8 12"><path d="M6.5 0.8 L1.2 6 L6.5 11.2" fill="none" stroke="#a0a0a4" stroke-width="1.2"/></svg>
<div class="it" style="left:1117.2px;top:700px">11/11/2022</div>
<svg class="a" style="left:1225.00px;top:698.30px" width="13" height="14.5" viewBox="0 0 13 14.5"><rect x="0" y="2.5" width="13" height="12" rx="1" fill="#a9a9ad"/><rect x="2.5" y="0.5" width="2" height="3" fill="#a9a9ad"/><rect x="8.5" y="0.5" width="2" height="3" fill="#a9a9ad"/><rect x="0" y="4.7" width="13" height="0.8" fill="#f7f8fa"/></svg>
<svg class="a" style="left:1247.00px;top:700.00px" width="8" height="12" viewBox="0 0 8 12"><path d="M1.2 0.8 L6.5 6 L1.2 11.2" fill="none" stroke="#a0a0a4" stroke-width="1.2"/></svg>
<div class="fl" style="left:700.50px;top:743.30px;width:120px">DURATION</div>
<div class="inp" style="left:832.6px;top:731.2px;width:163.8px;height:35.2px"></div>
<div class="it" style="left:842.4px;top:743px">30 days</div>
<svg class="a" style="left:977.50px;top:739.00px" width="10" height="19" viewBox="0 0 10 19"><path d="M0.5 5.5 L5 0.5 L9.5 5.5 Z M0.5 13.5 L5 18.5 L9.5 13.5 Z" fill="#a9a9ad"/></svg>
<div class="a" style="left:973.5px;top:821.3px;width:88.5px;height:29.3px;background:#4a86f0;border-radius:2px"></div>
<div class="t" style="left:973.5px;top:830.8px;width:88.5px;text-align:center;font-size:10.8px;color:#fff">SAVE</div>
<div class="a" style="left:1073.5px;top:821.3px;width:89px;height:29.3px;background:#f0f1f3;border:1px solid #dcdde0;border-radius:2px"></div>
<div class="t" style="left:1073.5px;top:830.8px;width:89px;text-align:center;font-size:10.8px;color:#7a7a7e">DELETE</div>
<div class="a" style="left:1174.3px;top:821.3px;width:88.7px;height:29.3px;background:#f0f1f3;border:1px solid #dcdde0;border-radius:2px"></div>
<div class="t" style="left:1174.3px;top:830.8px;width:88.7px;text-align:center;font-size:10.8px;color:#7a7a7e">CANCEL</div>
</body></html>
